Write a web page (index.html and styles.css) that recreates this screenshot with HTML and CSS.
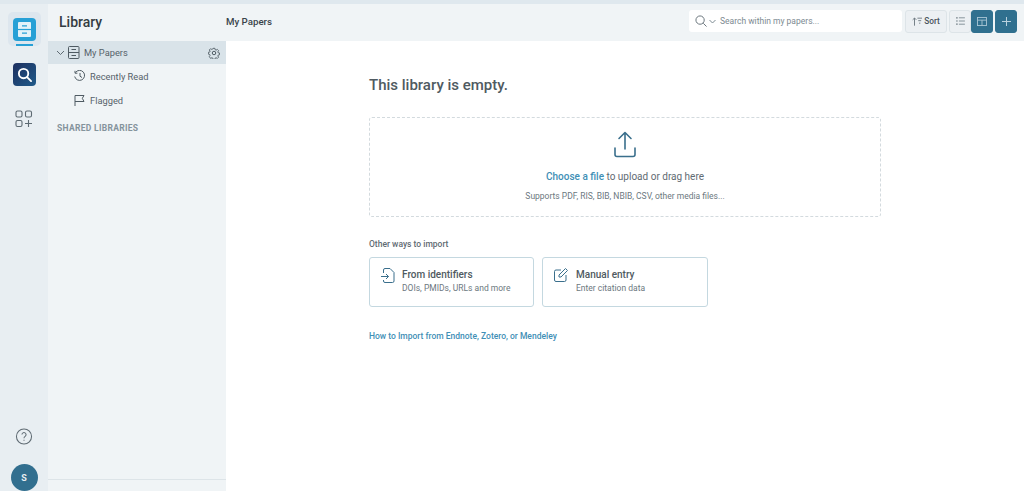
FILE: index.html
```html
<!DOCTYPE html>
<html lang="en">
<head>
  <meta charset="UTF-8" />
  <title>Library</title>
  <link rel="stylesheet" href="styles.css">
</head>
<body>
  <div class="top-strip"></div>
  <div class="app">
    <nav class="rail">
      <div class="rail-active">
        <div class="app-tile tile-library">
          <svg width="13" height="15" viewBox="0 0 13 15" fill="none" stroke-width="1.200">
            <rect width="13" height="15" rx="1" fill="#e3f2f9"/>
            <path d="M0 7.500h13" stroke="#27a0d6"/>
            <path d="M4 3.800h5M4 11.200h5" stroke="#27a0d6"/>
          </svg>
        </div>
        <div class="active-bar"></div>
      </div>
      <div class="app-tile tile-search">
        <svg width="15" height="15" viewBox="0 0 16 16" fill="none" stroke="#fff" stroke-width="2">
          <circle cx="7" cy="7" r="5"/>
          <path d="M11 11l4 4" stroke-linecap="round"/>
        </svg>
      </div>
      <svg class="rail-add" width="18" height="18" viewBox="0 0 18 18" fill="none" stroke="#5d6a72" stroke-width="1.100">
        <rect x="1" y="1" width="6" height="6" rx="1.500"/>
        <rect x="10.500" y="1" width="6" height="6" rx="1.500"/>
        <rect x="1" y="10.500" width="6" height="6" rx="1.500"/>
        <path d="M13.500 10v7M10 13.500h7"/>
      </svg>
      <div class="rail-bottom">
        <svg width="18" height="18" viewBox="0 0 18 18" fill="none" stroke="#5f6b73" stroke-width="1.100">
          <circle cx="9" cy="9" r="8"/>
          <path d="M6.800 7a2.200 2.200 0 1 1 3.400 1.900c-.8.500-1.200 1-1.200 1.900"/>
          <path d="M9 12.400v1.200"/>
        </svg>
        <div class="avatar">S</div>
      </div>
    </nav>

    <aside class="sidebar">
      <h1 class="sidebar-title">Library</h1>
      <div class="tree-row tree-row-active">
        <svg class="chev" width="9" height="6" viewBox="0 0 9 6" fill="none" stroke="#5f6b73"><path d="M1 1l3.500 3.500L8 1"/></svg>
        <svg width="12" height="13" viewBox="0 0 12 13" fill="none" stroke="#4f5b63">
          <rect x=".5" y=".5" width="10.500" height="12" rx="1"/>
          <path d="M.5 6.500h10.500M3.500 3.500h4.500M3.500 9.500h4.500"/>
        </svg>
        <span class="tree-label">My Papers</span>
        <svg class="gear" width="12" height="12" viewBox="0 0 24 24" fill="none" stroke="#4f5b63" stroke-width="2">
          <circle cx="12" cy="12" r="3.500"/>
          <path d="M10 1.500h4l.7 3.200 2 .9 2.800-1.700 2.800 2.800-1.700 2.800.9 2 3 .5v4l-3 .7-.9 2 1.700 2.800-2.800 2.800-2.800-1.700-2 .9-.7 3h-4l-.7-3-2-.9-2.800 1.700L1.500 20l1.700-2.800-.9-2-3-.7v-4l3-.5.9-2L1.500 5.200l2.800-2.800 2.800 1.700 2-.9z" transform="translate(1.300 1.300) scale(.89)"/>
        </svg>
      </div>
      <div class="tree-row tree-child">
        <svg width="12" height="12" viewBox="0 0 12 12" fill="none" stroke="#4f5b63">
          <path d="M1.500 2.500a5 5 0 1 1-.8 4"/>
          <path d="M1 .8v2.400h2.400M6 3v3.200l2 1.300"/>
        </svg>
        <span>Recently Read</span>
      </div>
      <div class="tree-row tree-child">
        <svg width="12" height="12" viewBox="0 0 12 12" fill="none" stroke="#4f5b63">
          <path d="M1 12V1.500h9L8.300 4.300 10 7.500H1"/>
        </svg>
        <span>Flagged</span>
      </div>
      <div class="section-label">SHARED LIBRARIES</div>
      <div class="sidebar-foot"></div>
    </aside>

    <div class="main">
      <header class="toolbar">
        <div class="crumb">My Papers</div>
        <div class="search-box">
          <svg width="12" height="12" viewBox="0 0 13 13" fill="none" stroke="#5f6b73">
            <circle cx="5.500" cy="5.500" r="4.500"/>
            <path d="M9 9l3.500 3.500"/>
          </svg>
          <svg width="7" height="5" viewBox="0 0 7 5" fill="none" stroke="#7d8a92"><path d="M.5 1L3.500 4l3-3"/></svg>
          <span class="search-hint">Search within my papers...</span>
        </div>
        <button class="tool-btn sort-btn">
          <svg width="10" height="9" viewBox="0 0 12 10" fill="none" stroke="#5f6b73">
            <path d="M3 10V1M.8 3L3 .8 5.200 3"/>
            <path d="M6.500 1H12M7.500 4h3.500M8.500 7h1.500"/>
          </svg>
          Sort
        </button>
        <div class="view-group">
          <button class="tool-btn icon-btn">
            <svg width="9" height="8" viewBox="0 0 11 10" fill="none" stroke="#6f7d85">
              <path d="M3.500 1H11M3.500 5H11M3.500 9H11"/>
              <path d="M0 1h2M0 5h2M0 9h2" stroke-width="1.500"/>
            </svg>
          </button>
          <button class="tool-btn icon-btn btn-dark">
            <svg width="10" height="9" viewBox="0 0 11 10" fill="none" stroke="#a9c6d5">
              <rect x=".5" y=".5" width="10" height="9"/>
              <path d="M.5 3.500h10M5.500 3.500v6"/>
            </svg>
          </button>
        </div>
        <button class="tool-btn icon-btn btn-dark btn-add">
          <svg width="9" height="9" viewBox="0 0 11 11" fill="none" stroke="#bcd3df" stroke-width="1.200"><path d="M5.500 0v11M0 5.500h11"/></svg>
        </button>
      </header>

      <main class="content">
        <div class="empty">
          <h2 class="empty-title">This library is empty.</h2>
          <div class="dropzone">
            <svg width="24" height="27" viewBox="0 0 24 27" fill="none" stroke="#3a6f8c" stroke-width="1.600" stroke-linecap="round" stroke-linejoin="round">
              <path d="M12 18V1.500M6 7.500l6-6 6 6"/>
              <path d="M2 17v6.500A2 2 0 0 0 4 25.500h16a2 2 0 0 0 2-2V17"/>
            </svg>
            <p class="drop-line"><a class="link">Choose a file</a> to upload or drag here</p>
            <p class="drop-note">Supports PDF, RIS, BIB, NBIB, CSV, other media files...</p>
          </div>
          <div class="other-label">Other ways to import</div>
          <div class="import-cards">
            <div class="import-card">
              <svg width="14" height="15" viewBox="0 0 14 15" fill="none" stroke="#3a6f8c">
                <path d="M2.500 5V2a1.500 1.500 0 0 1 1.500-1.500h5L13 4.500V13a1.500 1.500 0 0 1-1.500 1.500H4A1.500 1.500 0 0 1 2.500 13v-1"/>
                <path d="M0 8.500h7.500M5 6l2.500 2.500L5 11"/>
              </svg>
              <div>
                <div class="card-title">From identifiers</div>
                <div class="card-sub">DOIs, PMIDs, URLs and more</div>
              </div>
            </div>
            <div class="import-card">
              <svg width="14" height="14" viewBox="0 0 14 14" fill="none" stroke="#3a6f8c">
                <path d="M7 2H2A1.500 1.500 0 0 0 .5 3.500v8.500A1.500 1.500 0 0 0 2 13.500h8.500A1.500 1.500 0 0 0 12 12V7"/>
                <path d="M5 7l6.500-6.500 2 2L7 9H5z"/>
              </svg>
              <div>
                <div class="card-title">Manual entry</div>
                <div class="card-sub">Enter citation data</div>
              </div>
            </div>
          </div>
          <a class="link how-link">How to Import from Endnote, Zotero, or Mendeley</a>
        </div>
      </main>
    </div>
  </div>
</body>
</html>
```

FILE: styles.css
```css
* {
  box-sizing: border-box;
}

html, body {
  height: 100%;
}

body {
  margin: 0;
  font-family: Roboto, sans-serif;
  color: #4a555c;
  background: #ffffff;
  display: flex;
  flex-direction: column;
  overflow: hidden;
}

.top-strip {
  height: 4px;
  background: #dfe8ee;
}

.app {
  flex: 1;
  display: flex;
  min-height: 0;
}

/* left rail */
.rail {
  width: 48px;
  background: #e8eef2;
  display: flex;
  flex-direction: column;
  align-items: center;
  padding-top: 8px;
}

.rail-active {
  width: 33px;
  height: 34px;
  margin-bottom: 17px;
  padding-top: 6px;
  background: #dde6ee;
  border-radius: 5px;
  display: flex;
  flex-direction: column;
  align-items: center;
}

.app-tile {
  width: 23px;
  height: 23px;
  flex: none;
  border-radius: 4px;
  display: flex;
  align-items: center;
  justify-content: center;
}

.tile-library {
  background: #27a0d6;
}

.tile-search {
  background: linear-gradient(135deg, #1d2f5f, #1f5a8a);
}

.active-bar {
  width: 17px;
  height: 2px;
  margin-top: 3px;
  background: #27a0d6;
}

.rail-add {
  margin-top: 24px;
}

.rail-bottom {
  margin-top: auto;
  display: flex;
  flex-direction: column;
  align-items: center;
  gap: 19px;
  height: 63px;
}

.avatar {
  width: 27px;
  height: 27px;
  flex: none;
  border-radius: 50%;
  background: #326f8f;
  color: #e8eef2;
  font-size: 9px;
  font-weight: 700;
  display: flex;
  align-items: center;
  justify-content: center;
}

/* library sidebar */
.sidebar {
  width: 178px;
  background: #f0f4f6;
  display: flex;
  flex-direction: column;
}

.sidebar-title {
  margin: 0;
  height: 37px;
  padding: 9px 0 0 11px;
  font-size: 14px;
  line-height: 18px;
  font-weight: 500;
  color: #333c42;
}

.tree-row {
  height: 24px;
  display: flex;
  align-items: center;
  font-size: 9.300px;
  color: #56626a;
}

.tree-row-active {
  height: 23px;
  background: #d9e3e9;
  padding: 0 6px 0 8px;
}

.chev {
  margin-right: 3px;
}

.tree-label {
  margin-left: 4px;
  flex: 1;
}

.tree-child {
  padding-left: 26px;
  gap: 4px;
}

.section-label {
  margin: 11px 0 0 9px;
  font-size: 8.500px;
  font-weight: 700;
  letter-spacing: .3px;
  color: #84939c;
}

.sidebar-foot {
  margin-top: auto;
  height: 12px;
  border-top: 1px solid #dde4e8;
}

/* main area */
.main {
  flex: 1;
  min-width: 0;
  display: flex;
  flex-direction: column;
}

.toolbar {
  height: 37px;
  background: #f0f4f6;
  display: flex;
  align-items: center;
  padding: 0 7px 3px 0;
}

.crumb {
  flex: 1;
  font-size: 9.700px;
  font-weight: 500;
  color: #3a444b;
}

.search-box {
  width: 213px;
  height: 22px;
  background: #ffffff;
  border-radius: 3px;
  display: flex;
  align-items: center;
  padding-left: 6px;
  gap: 2px;
}

.search-hint {
  margin-left: 2px;
  font-size: 8.500px;
  color: #7d8a92;
}

.tool-btn {
  height: 23px;
  border: 1px solid #dde4e8;
  border-radius: 3px;
  background: #ecf0f3;
  font-family: inherit;
  padding: 0;
  display: flex;
  align-items: center;
  justify-content: center;
}

.sort-btn {
  width: 42px;
  margin-left: 3px;
  gap: 2px;
  font-size: 8.300px;
  font-weight: 500;
  color: #4a555c;
}

.view-group {
  display: flex;
  margin-left: 2px;
}

.icon-btn {
  width: 22px;
}

.btn-dark {
  background: #30708f;
  border-color: #30708f;
}

.btn-add {
  margin-left: 2px;
}

.content {
  flex: 1;
  display: flex;
  justify-content: center;
  padding-top: 35px;
}

.empty {
  width: 512px;
}

.empty-title {
  margin: 0;
  font-size: 15px;
  line-height: 18px;
  font-weight: 500;
  color: #4f5a61;
}

.dropzone {
  height: 100px;
  margin-top: 23px;
  border: 1px dashed #d3dade;
  border-radius: 3px;
  display: flex;
  flex-direction: column;
  align-items: center;
  padding-top: 13px;
}

.drop-line {
  margin: 12px 0 0;
  font-size: 10px;
  line-height: 13px;
  color: #5f6b73;
}

.drop-note {
  margin: 8px 0 0;
  font-size: 8.500px;
  line-height: 11px;
  color: #6c7880;
}

.link {
  color: #3f8fb6;
  font-weight: 500;
}

.other-label {
  margin-top: 22px;
  font-size: 8.500px;
  line-height: 11px;
  font-weight: 500;
  color: #5f6b73;
}

.import-cards {
  display: flex;
  gap: 8px;
  margin-top: 7px;
}

.import-card {
  width: 165px;
  height: 50px;
  border: 1px solid #c4d8e0;
  border-radius: 3px;
  padding: 10px 0 0 11px;
  display: flex;
  gap: 7px;
}

.import-card + .import-card {
  width: 166px;
  gap: 8px;
}

.card-title {
  font-size: 10px;
  line-height: 13px;
  font-weight: 500;
  color: #4f5a61;
}

.card-sub {
  margin-top: 2px;
  font-size: 8.500px;
  line-height: 11px;
  color: #6c7880;
}

.how-link {
  display: block;
  margin-top: 24px;
  font-size: 8.500px;
  line-height: 11px;
}
```
